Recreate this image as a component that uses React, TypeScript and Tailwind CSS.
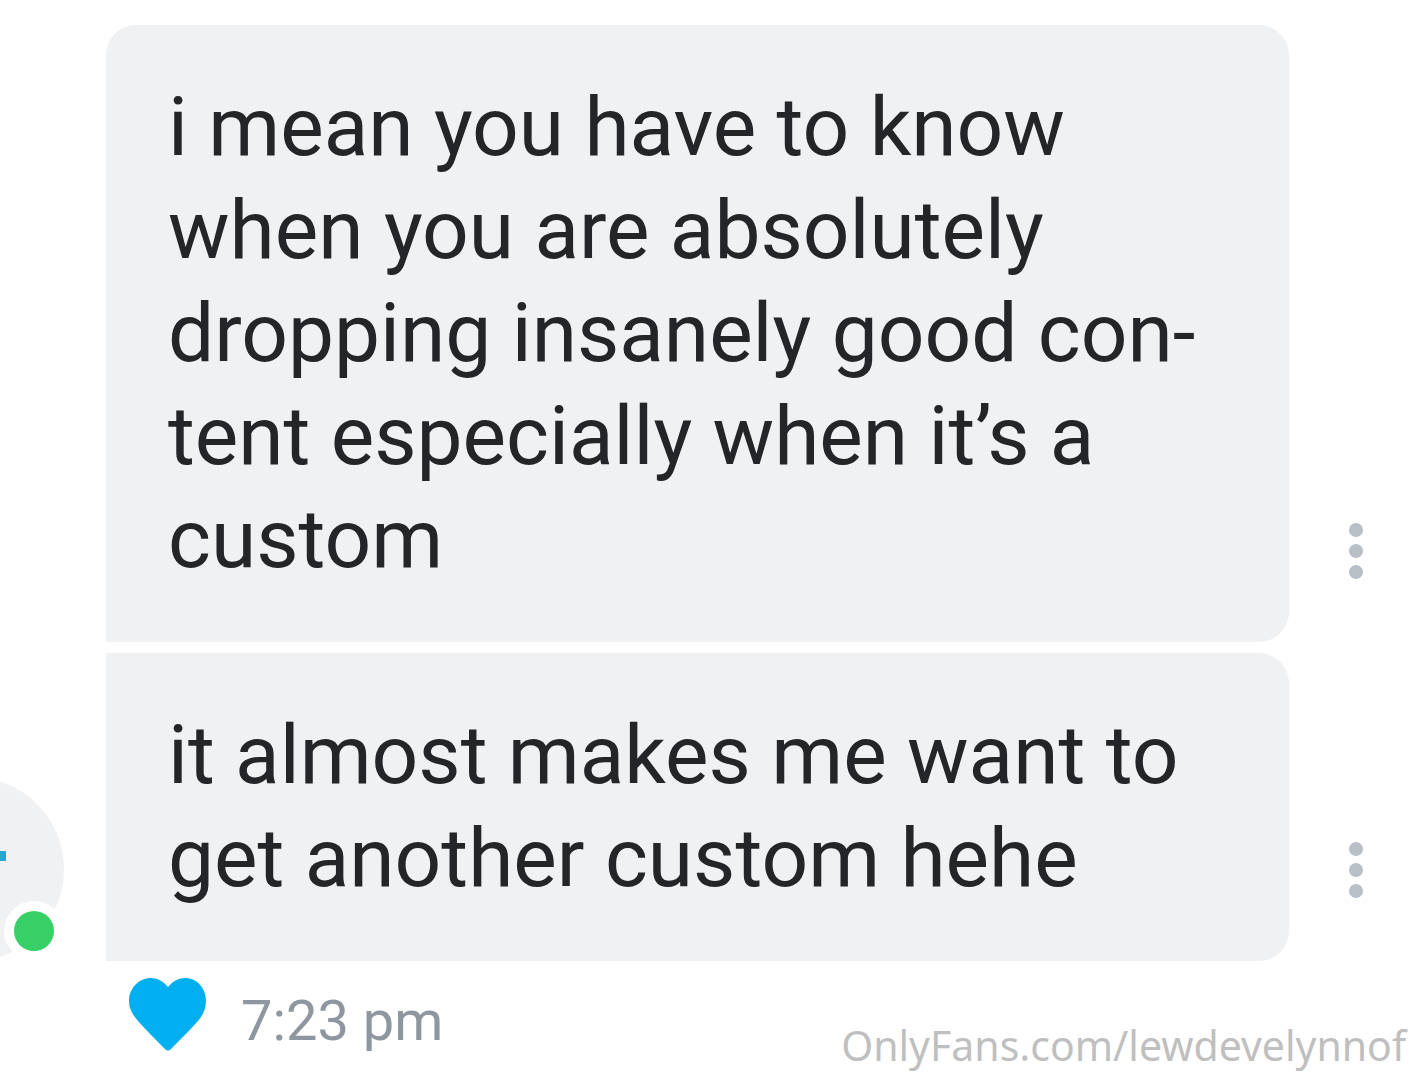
import type { ReactNode } from "react";

type MessageProps = {
  id: string;
  corners: string;
  children: ReactNode;
};

function DotsIcon() {
  return (
    <svg viewBox="0 0 16 56" className="h-[56px] w-[16px]" fill="currentColor" aria-hidden="true">
      <circle cx="8" cy="7" r="7" />
      <circle cx="8" cy="28" r="7" />
      <circle cx="8" cy="49" r="7" />
    </svg>
  );
}

function Message({ id, corners, children }: MessageProps) {
  return (
    <div className="flex items-end">
      <div className={`flex-1 bg-[#f0f1f3] px-[62px] py-[51px] ${corners}`}>
        <p id={id} className="text-[82px] leading-[103px] whitespace-nowrap text-[#242529]">
          {children}
        </p>
      </div>
      <div className="flex w-[125px] shrink-0 justify-center pb-[63px] pl-2">
        <button type="button" aria-label="Message options" aria-describedby={id} className="text-[#b9bfc6]">
          <DotsIcon />
        </button>
      </div>
    </div>
  );
}

function Avatar() {
  return (
    <div className="relative -ml-[120px] size-[184px] rounded-full bg-[#f0f1f3]">
      <span className="absolute top-[74px] left-[116px] h-[10px] w-[10px] bg-[#2ba3cf]" />
      <span className="absolute right-0 bottom-0 flex size-[60px] items-center justify-center rounded-full bg-white">
        <span className="size-[40px] rounded-full bg-[#37d067]" />
      </span>
    </div>
  );
}

export default function App() {
  return (
    <main className="relative flex min-h-screen overflow-hidden bg-white font-['Roboto',sans-serif]">
      <div className="flex w-[106px] shrink-0 flex-col justify-end pb-[119px]">
        <Avatar />
      </div>
      <div className="min-w-0 flex-1 pt-[25px]">
        <div className="flex flex-col gap-[11px]">
          <Message id="message-1" corners="rounded-t-[30px] rounded-br-[30px]">
            i mean you have to know
            <br />
            when you are absolutely
            <br />
            dropping insanely good con-
            <br />
            tent especially when it’s a
            <br />
            custom
          </Message>
          <Message id="message-2" corners="rounded-r-[30px]">
            it almost makes me want to
            <br />
            get another custom hehe
          </Message>
        </div>
        <div className="flex items-start pt-4 pl-[23px]">
          <button type="button" aria-label="Like" className="text-[#00aff0]">
            <svg viewBox="0 0 78 74" className="h-[74px] w-[78px]" fill="currentColor" aria-hidden="true">
              <path d="M39 10C44 4 50 1 56 1C68 1 77 11 77 24C77 32 74 38 69 44C62 52 52 62 42 72Q39 75 36 72C26 62 16 52 9 44C4 38 0 32 0 24C0 11 10 1 22 1C28 1 34 4 39 10Z" />
            </svg>
          </button>
          <time dateTime="19:23" className="pt-2 pl-[34px] text-[56px] leading-[72px] text-[#8e979f]">
            7:23 pm
          </time>
        </div>
      </div>
      <p className="absolute right-2 bottom-2 font-['Noto_Sans',sans-serif] text-[41px] leading-[54px] text-[#bfbfbf]">
        OnlyFans.com/lewdevelynnof
      </p>
    </main>
  );
}
